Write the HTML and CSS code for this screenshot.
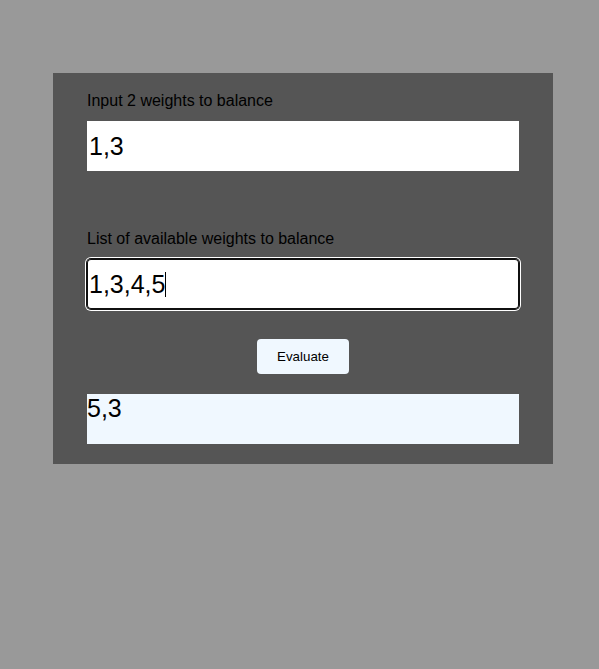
FILE: index.html
```html
<!DOCTYPE html>
<html>
<head>
<meta charset="utf-8">
<title>Balance</title>
<link rel="stylesheet" href="styles.css">
</head>
<body>
<div class="panel">
  <label class="label">Input 2 weights to balance</label>
  <input class="field" type="text" value="1,3">
  <label class="label label-second">List of available weights to balance</label>
  <div class="field-wrap">
    <input class="field field-focus" type="text" value="1,3,4,5">
    <span class="caret"></span>
  </div>
  <div class="actions">
    <button class="btn" type="button">Evaluate</button>
  </div>
  <div class="output">5,3</div>
</div>
</body>
</html>
```
FILE: styles.css
```css
html, body {
  margin: 0;
  padding: 0;
}
body {
  background: #999999;
  font-family: "Liberation Sans", Arial, sans-serif;
  height: 669px;
}
.panel {
  box-sizing: border-box;
  width: 500px;
  margin: 73px 0 0 53px;
  background: #555555;
  padding: 19px 34px 20px;
  display: flex;
  flex-direction: column;
}
.label {
  display: block;
  font-size: 16px;
  line-height: 18px;
  color: #000;
  margin-bottom: 11px;
}
.label-second {
  margin-top: 59px;
  margin-bottom: 11px;
}
.field {
  box-sizing: border-box;
  width: 432px;
  height: 50px;
  border: none;
  padding: 0 2px;
  margin: 0;
  background: #ffffff;
  font-family: "Liberation Sans", Arial, sans-serif;
  font-size: 25px;
  color: #000;
  outline: none;
  display: block;
}
.field-wrap {
  position: relative;
  width: 432px;
  height: 50px;
}
.field-focus {
  border-radius: 4px;
  box-shadow: 0 0 0 1px #101010, 0 0 0 2px #ffffff, inset 0 0 0 1px #101010;
}
.caret {
  position: absolute;
  left: 78px;
  top: 13px;
  width: 1px;
  height: 25px;
  background: #000;
}
.actions {
  display: flex;
  justify-content: center;
  margin-top: 30px;
}
.btn {
  box-sizing: border-box;
  height: 35px;
  padding: 0 20px;
  border: none;
  border-radius: 4px;
  background: #f0f8ff;
  font-family: "Liberation Sans", Arial, sans-serif;
  font-size: 13.33px;
  color: #000;
}
.output {
  margin-top: 20px;
  width: 432px;
  height: 50px;
  background: #f0f8ff;
  font-size: 25px;
  color: #000;
}
```
